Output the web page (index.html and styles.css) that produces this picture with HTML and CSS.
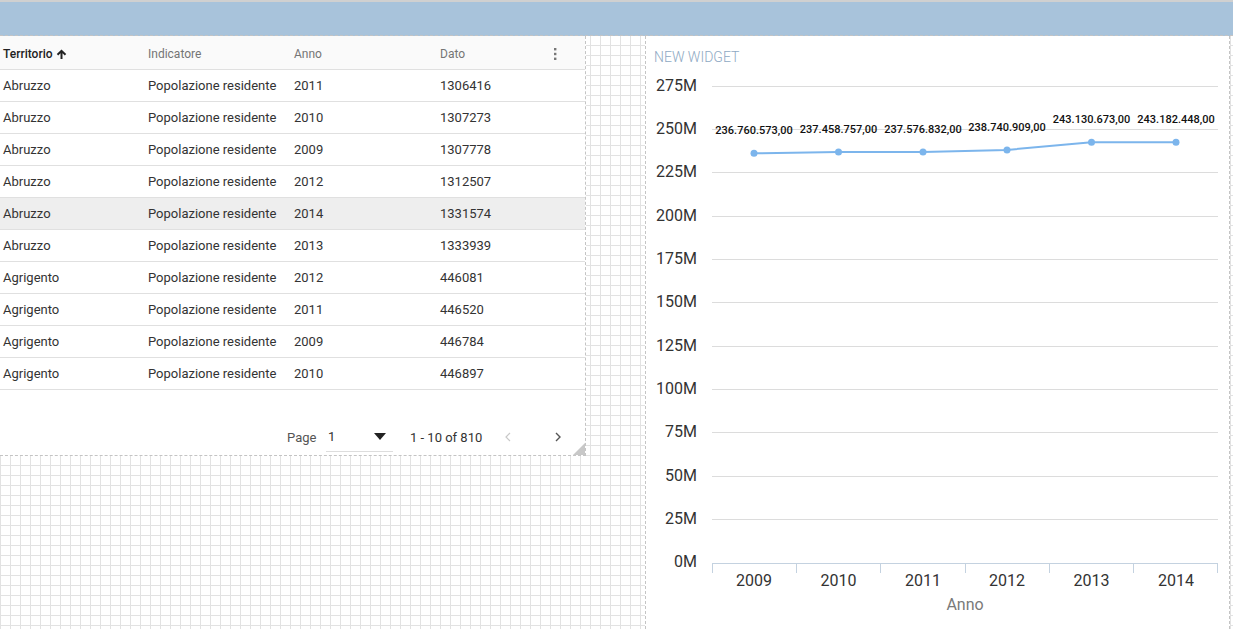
FILE: index.html
```html
<!DOCTYPE html>
<html lang="it">
<head>
<meta charset="utf-8">
<title>Dashboard</title>
<link rel="stylesheet" href="styles.css">
</head>
<body>
<div class="page">
  <div class="topbar"></div>
  <div class="content">
    <section class="table-widget">
      <div class="thead">
        <div class="th th-sorted">Territorio
          <svg class="sort" width="11" height="11" viewBox="0 0 11 11"><path d="M5.5 10V2 M1.5 5.8 L5.5 1.8 L9.5 5.8" fill="none" stroke="#222" stroke-width="2"/></svg>
        </div>
        <div class="th">Indicatore</div>
        <div class="th">Anno</div>
        <div class="th th-last">Dato
          <svg class="kebab" width="4" height="14" viewBox="0 0 4 14"><rect x="1" y="1" width="2.4" height="2.4" fill="#777"/><rect x="1" y="5.8" width="2.4" height="2.4" fill="#777"/><rect x="1" y="10.6" width="2.4" height="2.4" fill="#777"/></svg>
        </div>
      </div>
      <div class="tr"><div>Abruzzo</div><div>Popolazione residente</div><div>2011</div><div>1306416</div></div>
      <div class="tr"><div>Abruzzo</div><div>Popolazione residente</div><div>2010</div><div>1307273</div></div>
      <div class="tr"><div>Abruzzo</div><div>Popolazione residente</div><div>2009</div><div>1307778</div></div>
      <div class="tr"><div>Abruzzo</div><div>Popolazione residente</div><div>2012</div><div>1312507</div></div>
      <div class="tr tr-hover"><div>Abruzzo</div><div>Popolazione residente</div><div>2014</div><div>1331574</div></div>
      <div class="tr"><div>Abruzzo</div><div>Popolazione residente</div><div>2013</div><div>1333939</div></div>
      <div class="tr"><div>Agrigento</div><div>Popolazione residente</div><div>2012</div><div>446081</div></div>
      <div class="tr"><div>Agrigento</div><div>Popolazione residente</div><div>2011</div><div>446520</div></div>
      <div class="tr"><div>Agrigento</div><div>Popolazione residente</div><div>2009</div><div>446784</div></div>
      <div class="tr"><div>Agrigento</div><div>Popolazione residente</div><div>2010</div><div>446897</div></div>
      <div class="pager">
        <span class="pager-label">Page</span>
        <div class="pager-select">
          <span>1</span>
          <svg width="12" height="7" viewBox="0 0 12 7"><polygon points="0,0 12,0 6,7" fill="#222"/></svg>
        </div>
        <span class="pager-range">1 - 10 of 810</span>
        <button class="pager-btn pager-prev" type="button"><svg width="6" height="10" viewBox="0 0 6 10"><polyline points="5,1 1,5 5,9" fill="none" stroke="#c8c8c8" stroke-width="1.2"/></svg></button>
        <button class="pager-btn pager-next" type="button"><svg width="6" height="10" viewBox="0 0 6 10"><polyline points="1,1 5,5 1,9" fill="none" stroke="#555" stroke-width="1.4"/></svg></button>
      </div>
      <div class="resize-handle"></div>
    </section>

    <section class="chart-widget">
      <div class="chart-title">NEW WIDGET</div>
      <svg class="chart" width="583" height="563" viewBox="0 0 583 563">
        <g transform="translate(-646,-66)">
          <g stroke="#dcdcdc" stroke-width="1">
            <line x1="712" y1="86.5" x2="1218" y2="86.5"/>
            <line x1="712" y1="129.5" x2="1218" y2="129.5"/>
            <line x1="712" y1="172.5" x2="1218" y2="172.5"/>
            <line x1="712" y1="216.5" x2="1218" y2="216.5"/>
            <line x1="712" y1="259.5" x2="1218" y2="259.5"/>
            <line x1="712" y1="302.5" x2="1218" y2="302.5"/>
            <line x1="712" y1="346.5" x2="1218" y2="346.5"/>
            <line x1="712" y1="389.5" x2="1218" y2="389.5"/>
            <line x1="712" y1="432.5" x2="1218" y2="432.5"/>
            <line x1="712" y1="476.5" x2="1218" y2="476.5"/>
            <line x1="712" y1="519.5" x2="1218" y2="519.5"/>
          </g>
          <g stroke="#c4d2e0" stroke-width="1">
            <line x1="712" y1="563.5" x2="1218" y2="563.5"/>
            <line x1="712.5" y1="563" x2="712.5" y2="573"/>
            <line x1="796.5" y1="563" x2="796.5" y2="573"/>
            <line x1="880.5" y1="563" x2="880.5" y2="573"/>
            <line x1="965.5" y1="563" x2="965.5" y2="573"/>
            <line x1="1049.5" y1="563" x2="1049.5" y2="573"/>
            <line x1="1133.5" y1="563" x2="1133.5" y2="573"/>
            <line x1="1217.5" y1="563" x2="1217.5" y2="573"/>
          </g>
          <g class="ylab" text-anchor="end">
            <text x="697" y="91">275M</text>
            <text x="697" y="134">250M</text>
            <text x="697" y="177">225M</text>
            <text x="697" y="221">200M</text>
            <text x="697" y="264">175M</text>
            <text x="697" y="307">150M</text>
            <text x="697" y="351">125M</text>
            <text x="697" y="394">100M</text>
            <text x="697" y="437">75M</text>
            <text x="697" y="481">50M</text>
            <text x="697" y="524">25M</text>
            <text x="697" y="567">0M</text>
          </g>
          <g class="xlab" text-anchor="middle">
            <text x="754" y="586">2009</text>
            <text x="838.5" y="586">2010</text>
            <text x="923" y="586">2011</text>
            <text x="1007" y="586">2012</text>
            <text x="1091.5" y="586">2013</text>
            <text x="1176" y="586">2014</text>
          </g>
          <text class="xtitle" x="965" y="610" text-anchor="middle">Anno</text>
          <polyline points="754,153.3 838.5,152.1 923,151.9 1007,149.9 1091.5,142.3 1176,142.2" fill="none" stroke="#7cb5ec" stroke-width="2" stroke-linejoin="round"/>
          <g fill="#7cb5ec">
            <circle cx="754" cy="153.3" r="3.5"/>
            <circle cx="838.5" cy="152.1" r="3.5"/>
            <circle cx="923" cy="151.9" r="3.5"/>
            <circle cx="1007" cy="149.9" r="3.5"/>
            <circle cx="1091.5" cy="142.3" r="3.5"/>
            <circle cx="1176" cy="142.2" r="3.5"/>
          </g>
          <g class="dlab" text-anchor="middle">
            <text x="754" y="134">236.760.573,00</text>
            <text x="838.5" y="133">237.458.757,00</text>
            <text x="923" y="133">237.576.832,00</text>
            <text x="1007" y="131">238.740.909,00</text>
            <text x="1091.5" y="123">243.130.673,00</text>
            <text x="1176" y="123">243.182.448,00</text>
          </g>
        </g>
      </svg>
    </section>
  </div>
</div>
</body>
</html>
```

FILE: styles.css
```css
* { box-sizing: border-box; }

html, body {
  margin: 0;
  padding: 0;
}

body {
  font-family: Roboto, "Liberation Sans", Arial, sans-serif;
  color: #333;
  overflow: hidden;
}

.page {
  width: 1233px;
  height: 629px;
  overflow: hidden;
  background-color: #ffffff;
  background-image:
    linear-gradient(to right, #e2e2e2 1px, transparent 1px),
    linear-gradient(to bottom, #e2e2e2 1px, transparent 1px);
  background-size: 10px 10px;
  background-position: 0 5px;
}

.topbar {
  height: 36px;
  background: #a8c3db;
  border-top: 2px solid #d0d0d0;
  border-bottom: 1px dashed #c4c4c4;
}

.content {
  display: flex;
  align-items: flex-start;
}

/* ---------- table widget ---------- */
.table-widget {
  position: relative;
  width: 586px;
  height: 420px;
  background: #fff;
  border-right: 1px dashed #c4c4c4;
  border-bottom: 1px dashed #c4c4c4;
  font-size: 13px;
}

.thead,
.tr {
  display: grid;
  grid-template-columns: 145px 146px 146px 1fr;
  padding-left: 3px;
  align-items: center;
  border-bottom: 1px solid #e0e0e0;
}

.thead {
  height: 34px;
  padding-top: 3px;
  background: #fafafa;
  font-size: 12px;
  color: #757575;
}

.th-sorted {
  color: #222;
  font-weight: 500;
  display: flex;
  align-items: center;
  gap: 3px;
}

.sort { display: block; }

.th-last {
  display: flex;
  align-items: center;
  justify-content: space-between;
  padding-right: 28px;
}

.kebab { display: block; margin-top: -1px; }

.tr {
  height: 32px;
  color: #333;
}

.tr-hover {
  background: #eeeeee;
}

.pager {
  display: flex;
  align-items: center;
  height: 30px;
  margin-top: 32px;
  padding-left: 287px;
  color: #555;
  font-size: 13px;
  white-space: nowrap;
}

.pager-label {
  width: 39px;
}

.pager-select {
  width: 67px;
  height: 30px;
  display: flex;
  align-items: center;
  justify-content: space-between;
  padding: 0 7px 0 2px;
  border-bottom: 1px solid #dddddd;
  color: #333;
}

.pager-select svg { display: block; }

.pager-range {
  margin-left: 17px;
  width: 71px;
  color: #333;
  white-space: nowrap;
}

.pager-btn {
  width: 24px;
  height: 24px;
  padding: 0;
  border: 0;
  background: transparent;
  display: flex;
  align-items: center;
  justify-content: center;
}

.pager-prev { margin-left: 15px; }
.pager-next { margin-left: 26px; }

.resize-handle {
  position: absolute;
  right: 0;
  bottom: 0;
  width: 0;
  height: 0;
  border-style: solid;
  border-width: 0 0 12px 12px;
  border-color: transparent transparent #c8c8c8 transparent;
}

/* ---------- chart widget ---------- */
.chart-widget {
  margin-left: 59px;
  width: 585px;
  height: 593px;
  background: #fff;
  border-left: 1px dashed #c4c4c4;
  border-right: 1px dashed #c4c4c4;
}

.chart-title {
  padding: 12px 8px 0 8px;
  line-height: 18px;
  height: 30px;
  font-size: 14px;
  font-weight: 300;
  color: #8ea9c3;
}

.chart {
  display: block;
  font-family: Roboto, "Liberation Sans", Arial, sans-serif;
}

.ylab text,
.xlab text {
  font-size: 16px;
  fill: #333;
}

.xtitle {
  font-size: 16px;
  fill: #7a7a7a;
}

.dlab text {
  font-size: 11px;
  font-weight: 500;
  fill: #111;
}
```
